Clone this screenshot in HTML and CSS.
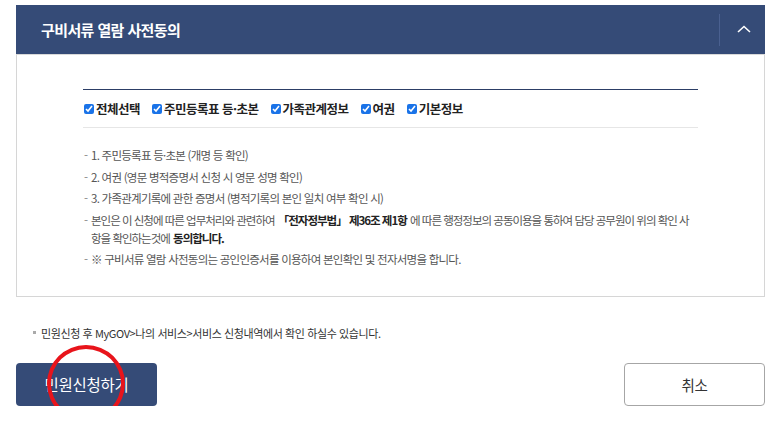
FILE: index.html
```html
<!DOCTYPE html>
<html lang="ko">
<head>
    <meta charset="UTF-8">
    <meta name="viewport" content="width=device-width, initial-scale=1.0">
    <title>구비서류 열람 사전동의</title>
    <link rel="stylesheet" href="styles.css">
</head>
<body>
    <div class="wrap">
        <div class="acc-head">
            <h2>구비서류 열람 사전동의</h2>
            <button class="acc-toggle" type="button" aria-label="접기">
                <svg width="14" height="8" viewBox="0 0 14 8"><path d="M1 7 L7 1.5 L13 7" fill="none" stroke="#fff" stroke-width="1.6"/></svg>
            </button>
        </div>
        <div class="acc-body">
            <div class="check-row">
                <label><input type="checkbox" checked> 전체선택</label>
                <label><input type="checkbox" checked> 주민등록표 등·초본</label>
                <label><input type="checkbox" checked> 가족관계정보</label>
                <label><input type="checkbox" checked> 여권</label>
                <label><input type="checkbox" checked> 기본정보</label>
            </div>
            <ul class="agree-list">
                <li>1. 주민등록표 등·초본 (개명 등 확인)</li>
                <li>2. 여권 (영문 병적증명서 신청 시 영문 성명 확인)</li>
                <li>3. 가족관계기록에 관한 증명서 (병적기록의 본인 일치 여부 확인 시)</li>
                <li class="tight">본인은 이 신청에 따른 업무처리와 관련하여 <b>「전자정부법」 제36조 제1항</b> 에 따른 행정정보의 공동이용을 통하여 담당 공무원이 위의 확인 사항을 확인하는것에 <b>동의합니다.</b></li>
                <li>※ 구비서류 열람 사전동의는 공인인증서를 이용하여 본인확인 및 전자서명을 합니다.</li>
            </ul>
        </div>

        <p class="note">민원신청 후 MyGOV&gt;나의 서비스&gt;서비스 신청내역에서 확인 하실수 있습니다.</p>

        <div class="btn-row">
            <div class="btn-mark">
                <button class="btn btn-primary" type="button">민원신청하기</button>
                <span class="circle"></span>
            </div>
            <button class="btn btn-line" type="button">취소</button>
        </div>
    </div>
</body>
</html>
```

FILE: styles.css
```css
body {
    margin: 0;
    font-family: "Noto Sans CJK KR", "Noto Sans", sans-serif;
    color: #333;
    background: #fff;
}
.wrap {
    padding: 5px 15px 0 16px;
}
.acc-head {
    background-color: #354b77;
    height: 49px;
    display: flex;
    align-items: center;
    justify-content: space-between;
    border-bottom: 1px solid #d9d9d9;
}
.acc-head h2 {
    margin: 0 0 0 25px;
    color: #fff;
    font-size: 15px;
    font-weight: bold;
    letter-spacing: -0.6px;
}
.acc-toggle {
    width: 46px;
    height: 32px;
    background: none;
    border: none;
    border-left: 1px solid #4a6090;
    display: flex;
    align-items: center;
    justify-content: center;
    padding: 0 0 2px 2px;
}
.acc-body {
    border: 1px solid #d6d6d6;
    border-top: none;
    padding: 34px 66px 24px;
}
.check-row {
    border-top: 1px solid #2c3e66;
    border-bottom: 1px solid #e6e6e6;
    height: 37px;
    display: flex;
    align-items: center;
    gap: 11px;
    padding-left: 1px;
}
.check-row label {
    font-size: 12.5px;
    font-weight: bold;
    color: #222;
    letter-spacing: -0.5px;
    display: flex;
    align-items: center;
    gap: 2px;
    margin-right: 1px;
}
.check-row input {
    width: 10px;
    height: 10px;
    margin: 0;
    accent-color: #1a73e8;
}
.agree-list {
    list-style: none;
    margin: 0;
    padding: 18px 0 0;
}
.agree-list li {
    position: relative;
    padding-left: 8px;
    font-size: 11.5px;
    line-height: 18px;
    color: #555;
    letter-spacing: -0.75px;
    margin-bottom: 3.5px;
}
.agree-list li.tight {
    letter-spacing: -1px;
}
.agree-list li::before {
    content: "-";
    position: absolute;
    left: 1px;
    top: 0;
    color: #888;
    letter-spacing: 0;
}
.agree-list b {
    color: #222;
    padding: 0 1px;
}
.note {
    margin: 28px 0 0 17px;
    padding-left: 8px;
    position: relative;
    font-size: 11px;
    color: #333;
    letter-spacing: -0.4px;
}
.note::before {
    content: "";
    position: absolute;
    left: 0;
    top: 6px;
    width: 3px;
    height: 3px;
    background: #aaa;
}
.btn-row {
    display: flex;
    justify-content: space-between;
    margin-top: 22px;
}
.btn-mark {
    position: relative;
}
.btn {
    width: 141px;
    height: 43px;
    border-radius: 4px;
    font-family: inherit;
    font-size: 15.5px;
    letter-spacing: -0.3px;
    cursor: pointer;
}
.btn-primary {
    background-color: #354b77;
    color: #fff;
    border: none;
}
.btn-line {
    background-color: #fff;
    color: #333;
    border: 1px solid #a6a6a6;
    font-size: 14.5px;
}
.circle {
    position: absolute;
    left: 31px;
    top: -18px;
    width: 70px;
    height: 69px;
    border: 4px solid #e8141b;
    border-radius: 50%;
    pointer-events: none;
}
```
